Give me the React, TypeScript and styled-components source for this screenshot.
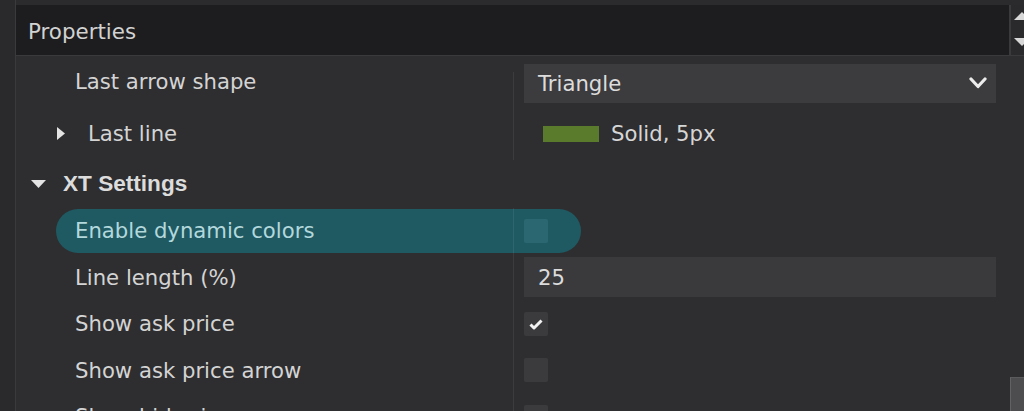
import React from 'react';
import styled, { createGlobalStyle } from 'styled-components';

const Global = createGlobalStyle`
  html, body { margin: 0; padding: 0; background: #2b2b2d; overflow: hidden; }
  body { font-family: "DejaVu Sans", Verdana, sans-serif; }
`;

const Shell = styled.div`
  display: flex;
  width: 1024px;
  height: 411px;
  overflow: hidden;
  background: #2b2b2d;
`;

const Gutter = styled.div`
  width: 15px;
  flex: none;
  background: #2a2a2c;
  border-right: 1px solid #3a3a3c;
`;

const Panel = styled.div`
  flex: 1;
  min-width: 0;
  display: flex;
  flex-direction: column;
  position: relative;
  padding-top: 5px;
`;

const Header = styled.div`
  display: flex;
  height: 50px;
  flex: none;
  border-bottom: 1px solid #3a3a3c;
`;

const Title = styled.div`
  flex: 1;
  display: flex;
  align-items: center;
  padding: 2px 0 0 12px;
  background: #1d1d1f;
  color: #d2d2d2;
  font-size: 21.4px;
`;

const SortArea = styled.div`
  width: 13px;
  flex: none;
  background: #2a2a2c;
  border-left: 2px solid #3a3a3c;
  overflow: hidden;
`;

const List = styled.div`
  flex: 1;
  display: flex;
  flex-direction: column;
  background: #2e2e30;
  overflow: hidden;
`;

const Row = styled.div<{ $h: number; $highlight?: boolean }>`
  position: relative;
  flex: none;
  height: ${(p) => p.$h}px;
  display: grid;
  grid-template-columns: 497px 1fr;
  &::before {
    content: '';
    display: ${(p) => (p.$highlight ? 'block' : 'none')};
    position: absolute;
    left: 40px;
    width: 525px;
    top: 1px;
    bottom: 1px;
    border-radius: 23px;
    background: #1f5a63;
  }
`;

const Label = styled.div<{ $indent: number; $category?: boolean; $highlight?: boolean }>`
  position: relative;
  z-index: 1;
  display: flex;
  align-items: center;
  padding-left: ${(p) => p.$indent}px;
  font-size: ${(p) => (p.$category ? '22.6px' : '21.2px')};
  font-family: ${(p) =>
    p.$category ? '"Liberation Sans", Arial, sans-serif' : '"DejaVu Sans", Verdana, sans-serif'};
  font-weight: ${(p) => (p.$category ? 700 : 400)};
  color: ${(p) => (p.$highlight ? '#b3d8dc' : p.$category ? '#dcdcdc' : '#d4d4d4')};
  white-space: nowrap;
`;

const Expander = styled.span<{ $gap: number }>`
  display: inline-flex;
  margin-right: ${(p) => p.$gap}px;
  color: #e2e2e2;
`;

const Value = styled.div<{ $dividerTop?: number }>`
  position: relative;
  z-index: 1;
  display: flex;
  align-items: center;
  padding: 0 28px 0 11px;
  font-size: 21.2px;
  color: #d6d6d6;
  &::before {
    content: '';
    display: ${(p) => (p.$dividerTop === undefined ? 'none' : 'block')};
    position: absolute;
    left: 0;
    top: ${(p) => p.$dividerTop ?? 0}px;
    bottom: 0;
    width: 1px;
    background: rgba(255, 255, 255, 0.07);
  }
`;

const Dropdown = styled.div`
  flex: 1;
  height: 39px;
  margin-top: 3px;
  display: flex;
  align-items: center;
  justify-content: space-between;
  padding: 0 9px 0 14px;
  background: #3c3c3f;
  color: #dcdcdc;
`;

const TextBox = styled.div`
  flex: 1;
  height: 40px;
  display: flex;
  align-items: center;
  padding-left: 14px;
  background: #3a3a3d;
  color: #dcdcdc;
`;

const LineValue = styled.div`
  display: flex;
  align-items: center;
  gap: 12px;
  padding-left: 19px;
`;

const Swatch = styled.span`
  width: 56px;
  height: 16px;
  background: #5a7a2c;
`;

const Checkbox = styled.span<{ $tinted?: boolean }>`
  width: 24px;
  height: 24px;
  border-radius: 2px;
  display: inline-flex;
  align-items: center;
  justify-content: center;
  background: ${(p) => (p.$tinted ? '#2b6770' : '#3b3b3e')};
`;

const Thumb = styled.div`
  position: absolute;
  right: 0;
  bottom: 0;
  width: 13px;
  height: 33px;
  background: #4d4d50;
  border-left: 1px solid #626265;
  border-top: 1px solid #5a5a5d;
`;

const RightArrow = () => (
  <svg width="8" height="13" viewBox="0 0 8 13">
    <polygon points="0,0 8,6.5 0,13" fill="#e4e4e4" />
  </svg>
);

const DownArrow = () => (
  <svg width="15" height="8" viewBox="0 0 15 8">
    <polygon points="0,0 15,0 7.5,8" fill="#e4e4e4" />
  </svg>
);

const Chevron = () => (
  <svg width="18" height="12" viewBox="0 0 18 12">
    <polyline points="2,2 9,9.5 16,2" fill="none" stroke="#ececec" strokeWidth="3.2" strokeLinecap="round" strokeLinejoin="round" />
  </svg>
);

const Check = () => (
  <svg width="24" height="24" viewBox="0 0 24 24">
    <polyline points="6.5,12.5 10,16 17.5,8.5" fill="none" stroke="#f2f2f2" strokeWidth="3" strokeLinejoin="round" />
  </svg>
);

const SortIcon = () => (
  <svg width="13" height="50" viewBox="0 0 13 50">
    <polygon points="3,15 11,7 19,15" fill="#d8d8d8" />
    <polygon points="3,33 19,33 11,41" fill="#d8d8d8" />
  </svg>
);

const LIST_ROW = 46.4;

export default function App() {
  return (
    <>
      <Global />
      <Shell>
        <Gutter />
        <Panel>
          <Header>
            <Title>Properties</Title>
            <SortArea>
              <SortIcon />
            </SortArea>
          </Header>
          <List>
            <Row $h={51}>
              <Label $indent={59}>Last arrow shape</Label>
              <Value $dividerTop={16}>
                <Dropdown>
                  <span>Triangle</span>
                  <Chevron />
                </Dropdown>
              </Value>
            </Row>
            <Row $h={53}>
              <Label $indent={41}>
                <Expander $gap={23}>
                  <RightArrow />
                </Expander>
                Last line
              </Label>
              <Value $dividerTop={0}>
                <LineValue>
                  <Swatch />
                  <span>Solid, 5px</span>
                </LineValue>
              </Value>
            </Row>
            <Row $h={47.8}>
              <Label $indent={15} $category>
                <Expander $gap={17}>
                  <DownArrow />
                </Expander>
                XT Settings
              </Label>
              <Value />
            </Row>
            <Row $h={LIST_ROW} $highlight>
              <Label $indent={59} $highlight>
                Enable dynamic colors
              </Label>
              <Value $dividerTop={0}>
                <Checkbox $tinted />
              </Value>
            </Row>
            <Row $h={LIST_ROW}>
              <Label $indent={59}>Line length (%)</Label>
              <Value $dividerTop={0}>
                <TextBox>25</TextBox>
              </Value>
            </Row>
            <Row $h={LIST_ROW}>
              <Label $indent={59}>Show ask price</Label>
              <Value $dividerTop={0}>
                <Checkbox>
                  <Check />
                </Checkbox>
              </Value>
            </Row>
            <Row $h={LIST_ROW}>
              <Label $indent={59}>Show ask price arrow</Label>
              <Value $dividerTop={0}>
                <Checkbox />
              </Value>
            </Row>
            <Row $h={LIST_ROW}>
              <Label $indent={59}>Show bid price</Label>
              <Value $dividerTop={0}>
                <Checkbox />
              </Value>
            </Row>
          </List>
          <Thumb />
        </Panel>
      </Shell>
    </>
  );
}
